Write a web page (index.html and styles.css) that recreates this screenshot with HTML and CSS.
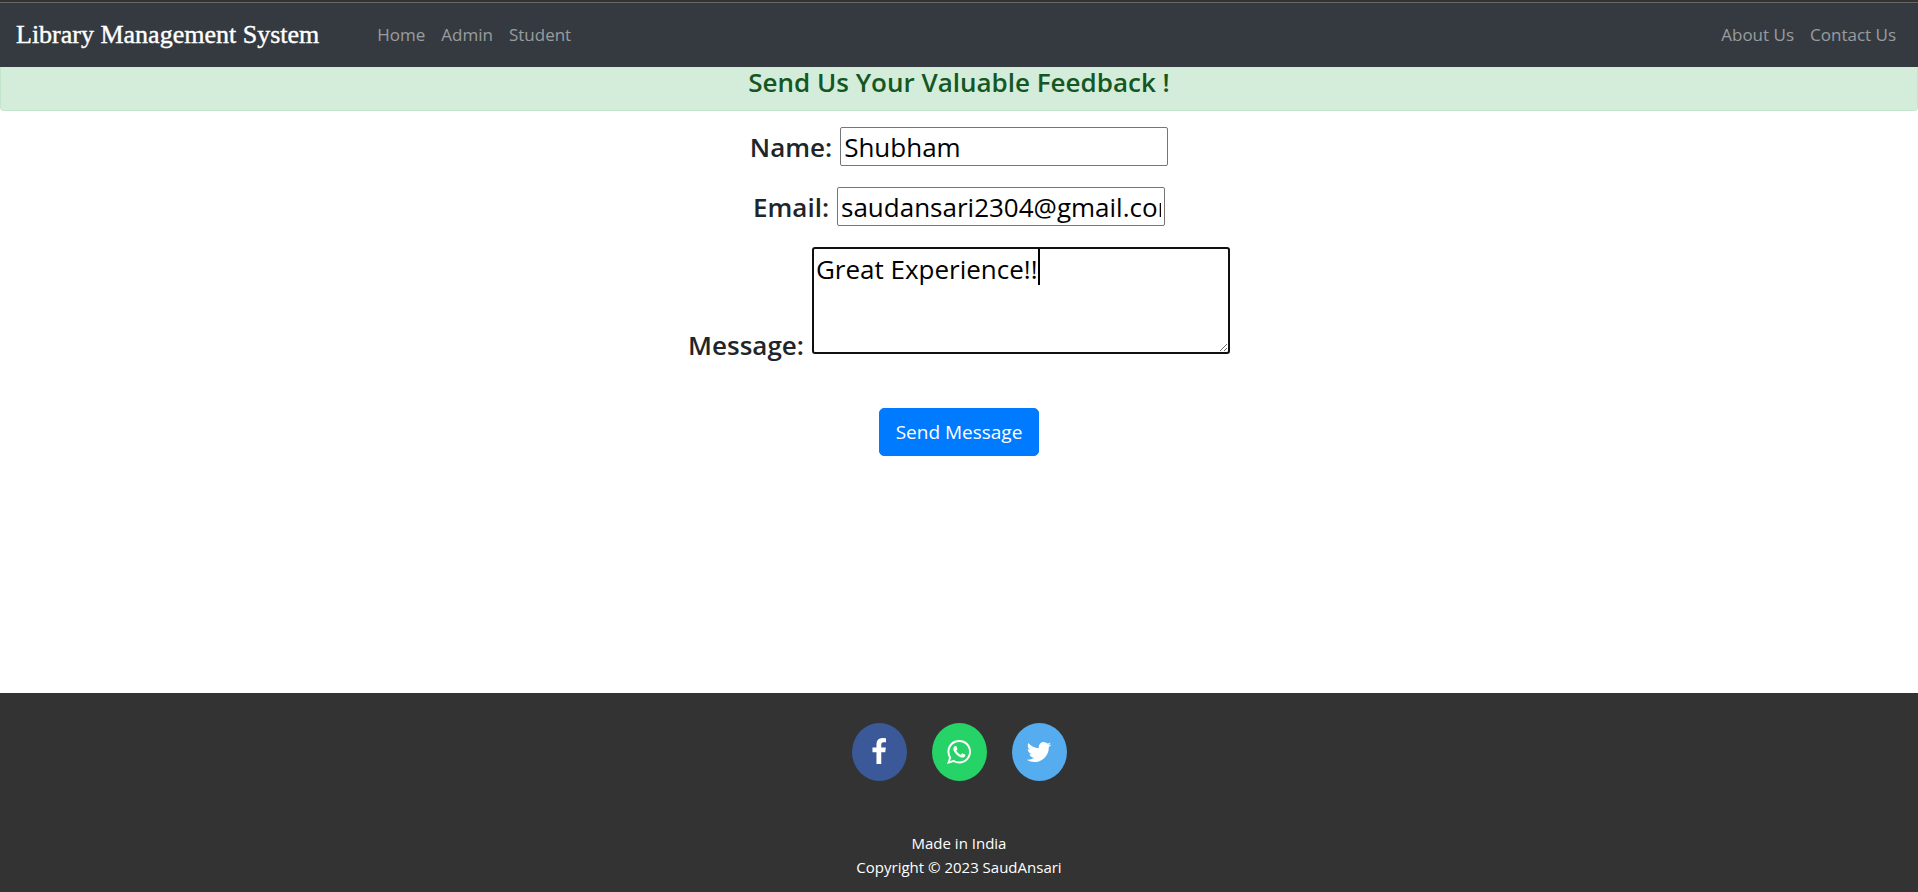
FILE: index.html
```html
<!DOCTYPE html>
<html lang="en">
<head>
<meta charset="utf-8">
<title>Library Management System</title>
<link rel="stylesheet" href="styles.css">
</head>
<body>
<nav class="navbar">
  <a class="brand" href="#">Library Management System</a>
  <div class="nav-links">
    <a href="#">Home</a>
    <a href="#">Admin</a>
    <a href="#">Student</a>
  </div>
  <div class="nav-links nav-end">
    <a href="#">About Us</a>
    <a href="#">Contact Us</a>
  </div>
</nav>
<main>
  <div class="alert"><h1>Send Us Your Valuable Feedback !</h1></div>
  <form class="feedback">
    <div class="field"><label for="name">Name:</label> <input id="name" type="text" value="Shubham"></div>
    <div class="field"><label for="email">Email:</label> <input id="email" type="text" value="saudansari2304@gmail.com"></div>
    <div class="field field-message"><label for="message">Message:</label> <span class="message-box"><textarea id="message">Great Experience!!</textarea><span class="caret"></span></span></div>
    <button class="send" type="button">Send Message</button>
  </form>
</main>
<footer class="footer">
  <div class="social">
    <a class="facebook" href="#" aria-label="Facebook"><svg width="28" height="28" viewBox="0 0 1792 1792"><path d="M1343 12v264h-157q-86 0-116 36t-30 108v189h293l-39 296h-254v759H734V905H479V609h255V391q0-186 104-288.500T1115 0q147 0 228 12z"/></svg></a>
    <a class="whatsapp" href="#" aria-label="WhatsApp"><svg width="28" height="28" viewBox="0 0 1792 1792"><path d="M1113 974q13 0 97.500 44t89.500 53q2 5 2 15 0 33-17 76-16 39-71 65.500t-102 26.500q-57 0-190-62-98-45-170-118T604 889q-72-107-71-194v-8q3-91 74-158 24-22 52-22 6 0 18 1.500t19 1.500q19 0 26.500 6.500T738 544q8 20 33 88t25 75q0 21-34.500 57.500T727 811q0 7 5 15 34 73 102 137 56 53 151 101 12 7 22 7 15 0 54-48.500t52-48.500zm-203 530q127 0 243.500-50t200.500-134 134-200.500 50-243.500-50-243.500T1354 432t-200.500-134T910 248t-243.500 50T466 432 332 632.500 282 876q0 203 120 368l-79 233 242-77q158 104 345 104zm0-1382q153 0 292.500 60T1443 343t161 240.500 60 292.500-60 292.500-161 240.500-240.500 161-292.500 60q-195 0-365-94l-417 134 136-405Q156 1087 156 876q0-153 60-292.500T377 343t240.500-161T910 122z"/></svg></a>
    <a class="twitter" href="#" aria-label="Twitter"><svg width="28" height="28" viewBox="0 0 1792 1792"><path d="M1684 408q-67 98-162 167 1 14 1 42 0 130-38 259.500T1369.500 1125 1185 1335.500t-258 146-323 54.500q-271 0-496-145 35 4 78 4 225 0 401-138-105-2-188-64.500T285 1033q33 5 61 5 43 0 85-11-112-23-185.500-111.500T172 710v-4q68 38 146 41-66-44-105-115t-39-154q0-88 44-163 121 149 294.500 238.500T884 653q-8-38-8-74 0-134 94.500-228.500T1199 256q140 0 236 102 109-21 205-78-37 115-142 178 93-10 186-50z"/></svg></a>
  </div>
  <p>Made in India</p>
  <p>Copyright © 2023 SaudAnsari</p>
</footer>
</body>
</html>
```

FILE: styles.css
```css
* { box-sizing: border-box; }

body {
  margin: 0;
  min-height: 100vh;
  display: flex;
  flex-direction: column;
  background: #fff;
  color: #212529;
  font-family: "Open Sans", "Noto Sans", sans-serif;
  font-size: 16px;
  line-height: 24px;
}

a { text-decoration: none; }

.navbar {
  display: flex;
  align-items: center;
  height: 67px;
  padding: 3px 22px 0 16px;
  background: linear-gradient(#333 0 2px, #666 2px 3px, #343a40 3px);
}

.brand {
  margin-right: 58px;
  color: #fff;
  font-family: "Liberation Serif", serif;
  font-size: 26px;
  -webkit-text-stroke: 0.4px #fff;
}

.nav-links {
  display: flex;
  gap: 16px;
}

.nav-links a {
  color: rgba(255, 255, 255, 0.5);
  font-size: 17px;
}

.nav-end { margin-left: auto; }

main { flex: 1; }

.alert {
  padding: 0 20px 12px;
  background: #d4edda;
  border: 1px solid #c3e6cb;
  border-top: 0;
  border-radius: 0 0 4px 4px;
  color: #155724;
  text-align: center;
}

.alert h1 {
  margin: 0;
  font-size: 26px;
  font-weight: 600;
  line-height: 31px;
}

.feedback {
  display: flex;
  flex-direction: column;
  align-items: center;
  padding-top: 16px;
  font-size: 26px;
}

.field {
  display: flex;
  align-items: center;
  gap: 8px;
  margin-bottom: 21px;
}

.field label {
  font-weight: 600;
  line-height: 34px;
}

.field input,
.field textarea {
  margin: 0;
  border: 1px solid #767676;
  border-radius: 2px;
  background: #fff;
  color: #000;
  font: inherit;
}

.field input {
  width: 328px;
  height: 39px;
  padding: 1px 3px;
}

.field-message {
  align-items: flex-end;
  margin-bottom: 46px;
}

.message-box {
  position: relative;
  display: flex;
  padding-bottom: 8px;
}

.field textarea {
  width: 418px;
  height: 107px;
  padding: 2px;
  border: 2px solid #101010;
  border-radius: 3px;
  line-height: 36px;
}

.caret {
  position: absolute;
  left: 226px;
  top: 2px;
  width: 2px;
  height: 36px;
  background: #000;
}

.send {
  padding: 8px 16px;
  border: 1px solid #007bff;
  border-radius: 5px;
  background: #007bff;
  color: #fff;
  font-family: inherit;
  font-size: 19px;
  line-height: 30px;
}

.footer {
  padding: 30px 0 13px;
  background: #333;
  color: #fff;
  text-align: center;
  font-size: 15px;
}

.social {
  display: flex;
  justify-content: center;
  gap: 25px;
  margin-bottom: 50px;
}

.social a {
  display: flex;
  align-items: center;
  justify-content: center;
  width: 55px;
  height: 58px;
  border-radius: 50%;
}

.social svg { fill: #fff; }
.facebook { background: #3b5998; }
.whatsapp { background: #25d366; }
.twitter { background: #55acee; }

.footer p { margin: 0; }
```
